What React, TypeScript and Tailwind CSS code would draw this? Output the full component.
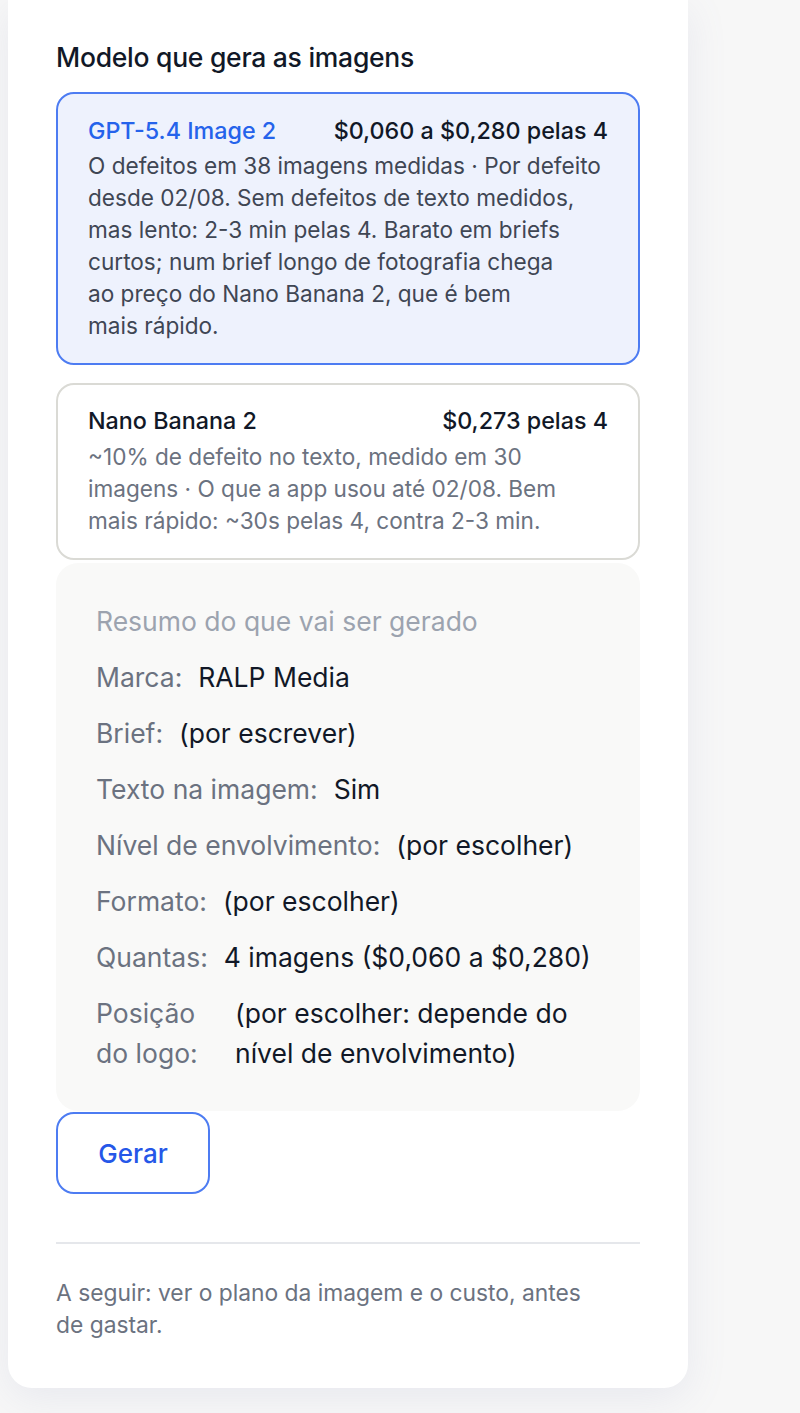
import React from "react";

const rows: { label: string; value: string }[] = [
  { label: "Marca:", value: "RALP Media" },
  { label: "Brief:", value: "(por escrever)" },
  { label: "Texto na imagem:", value: "Sim" },
  { label: "Nível de envolvimento:", value: "(por escolher)" },
  { label: "Formato:", value: "(por escolher)" },
  { label: "Quantas:", value: "4 imagens ($0,060 a $0,280)" },
];

export default function App() {
  return (
    <div
      className="min-h-[1413px] bg-[#f7f7f7] pl-2"
      style={{ fontFamily: "Inter, 'Noto Sans', sans-serif" }}
    >
      <div className="w-[680px] rounded-b-[24px] bg-white px-12 pt-[41px] pb-[47px] shadow-[0_10px_40px_rgba(120,130,180,0.12)]">
        <h2 className="text-[26.5px] leading-[32px] font-medium text-[#111827] tracking-[-0.01em]">
          Modelo que gera as imagens
        </h2>

        <div className="mt-[19px] flex flex-col gap-[18px]">
          <div className="rounded-[18px] border-2 border-[#4d7cf2] bg-[#eef2fd] px-[30px] pt-[21px] pb-[21px]">
            <div className="flex items-center justify-between text-[23.3px] leading-[32px] font-medium">
              <span className="text-[#2563eb]">GPT-5.4 Image 2</span>
              <span className="text-[#111827]">$0,060 a $0,280 pelas 4</span>
            </div>
            <p className="mt-[3px] text-[22.6px] leading-[32px] text-[#3f4654]">
              O defeitos em 38 imagens medidas · Por defeito
              <br />
              desde 02/08. Sem defeitos de texto medidos,
              <br />
              mas lento: 2-3 min pelas 4. Barato em briefs
              <br />
              curtos; num brief longo de fotografia chega
              <br />
              ao preço do Nano Banana 2, que é bem
              <br />
              mais rápido.
            </p>
          </div>

          <div className="rounded-[18px] border-2 border-[#dadad5] bg-white px-[30px] pt-[20px] pb-[21px]">
            <div className="flex items-center justify-between text-[23.3px] leading-[32px] font-medium text-[#111827]">
              <span>Nano Banana 2</span>
              <span>$0,273 pelas 4</span>
            </div>
            <p className="mt-[4px] text-[22.6px] leading-[32px] text-[#6b7280]">
              ~10% de defeito no texto, medido em 30
              <br />
              imagens · O que a app usou até 02/08. Bem
              <br />
              mais rápido: ~30s pelas 4, contra 2-3 min.
            </p>
          </div>
        </div>

        <div className="mt-[3px] rounded-[22px] bg-[#f9f9f8] px-10 py-[38px] text-[26.5px] leading-[40px]">
          <div className="text-[#9ca3af]">Resumo do que vai ser gerado</div>
          <div className="mt-4 flex flex-col gap-4">
            {rows.map((r) => (
              <div key={r.label} className="flex gap-4">
                <span className="text-[#6b7280]">{r.label}</span>
                <span className="text-[#111827]">{r.value}</span>
              </div>
            ))}
            <div className="flex gap-4">
              <span className="w-[123px] shrink-0 text-[#6b7280]">Posição do logo:</span>
              <span className="text-[#111827]">
                (por escolher: depende do nível de envolvimento)
              </span>
            </div>
          </div>
        </div>

        <button className="mt-px h-[82px] w-[154px] rounded-[18px] border-2 border-[#4d7cf2] bg-white text-[26px] font-medium text-[#2557e8]">
          Gerar
        </button>

        <div className="mt-[48px] h-[2px] bg-[#e5e7eb]" />

        <p className="mt-[33px] max-w-[532px] text-[22.8px] leading-[32px] text-[#6b7280]">
          A seguir: ver o plano da imagem e o custo, antes de gastar.
        </p>
      </div>
    </div>
  );
}
